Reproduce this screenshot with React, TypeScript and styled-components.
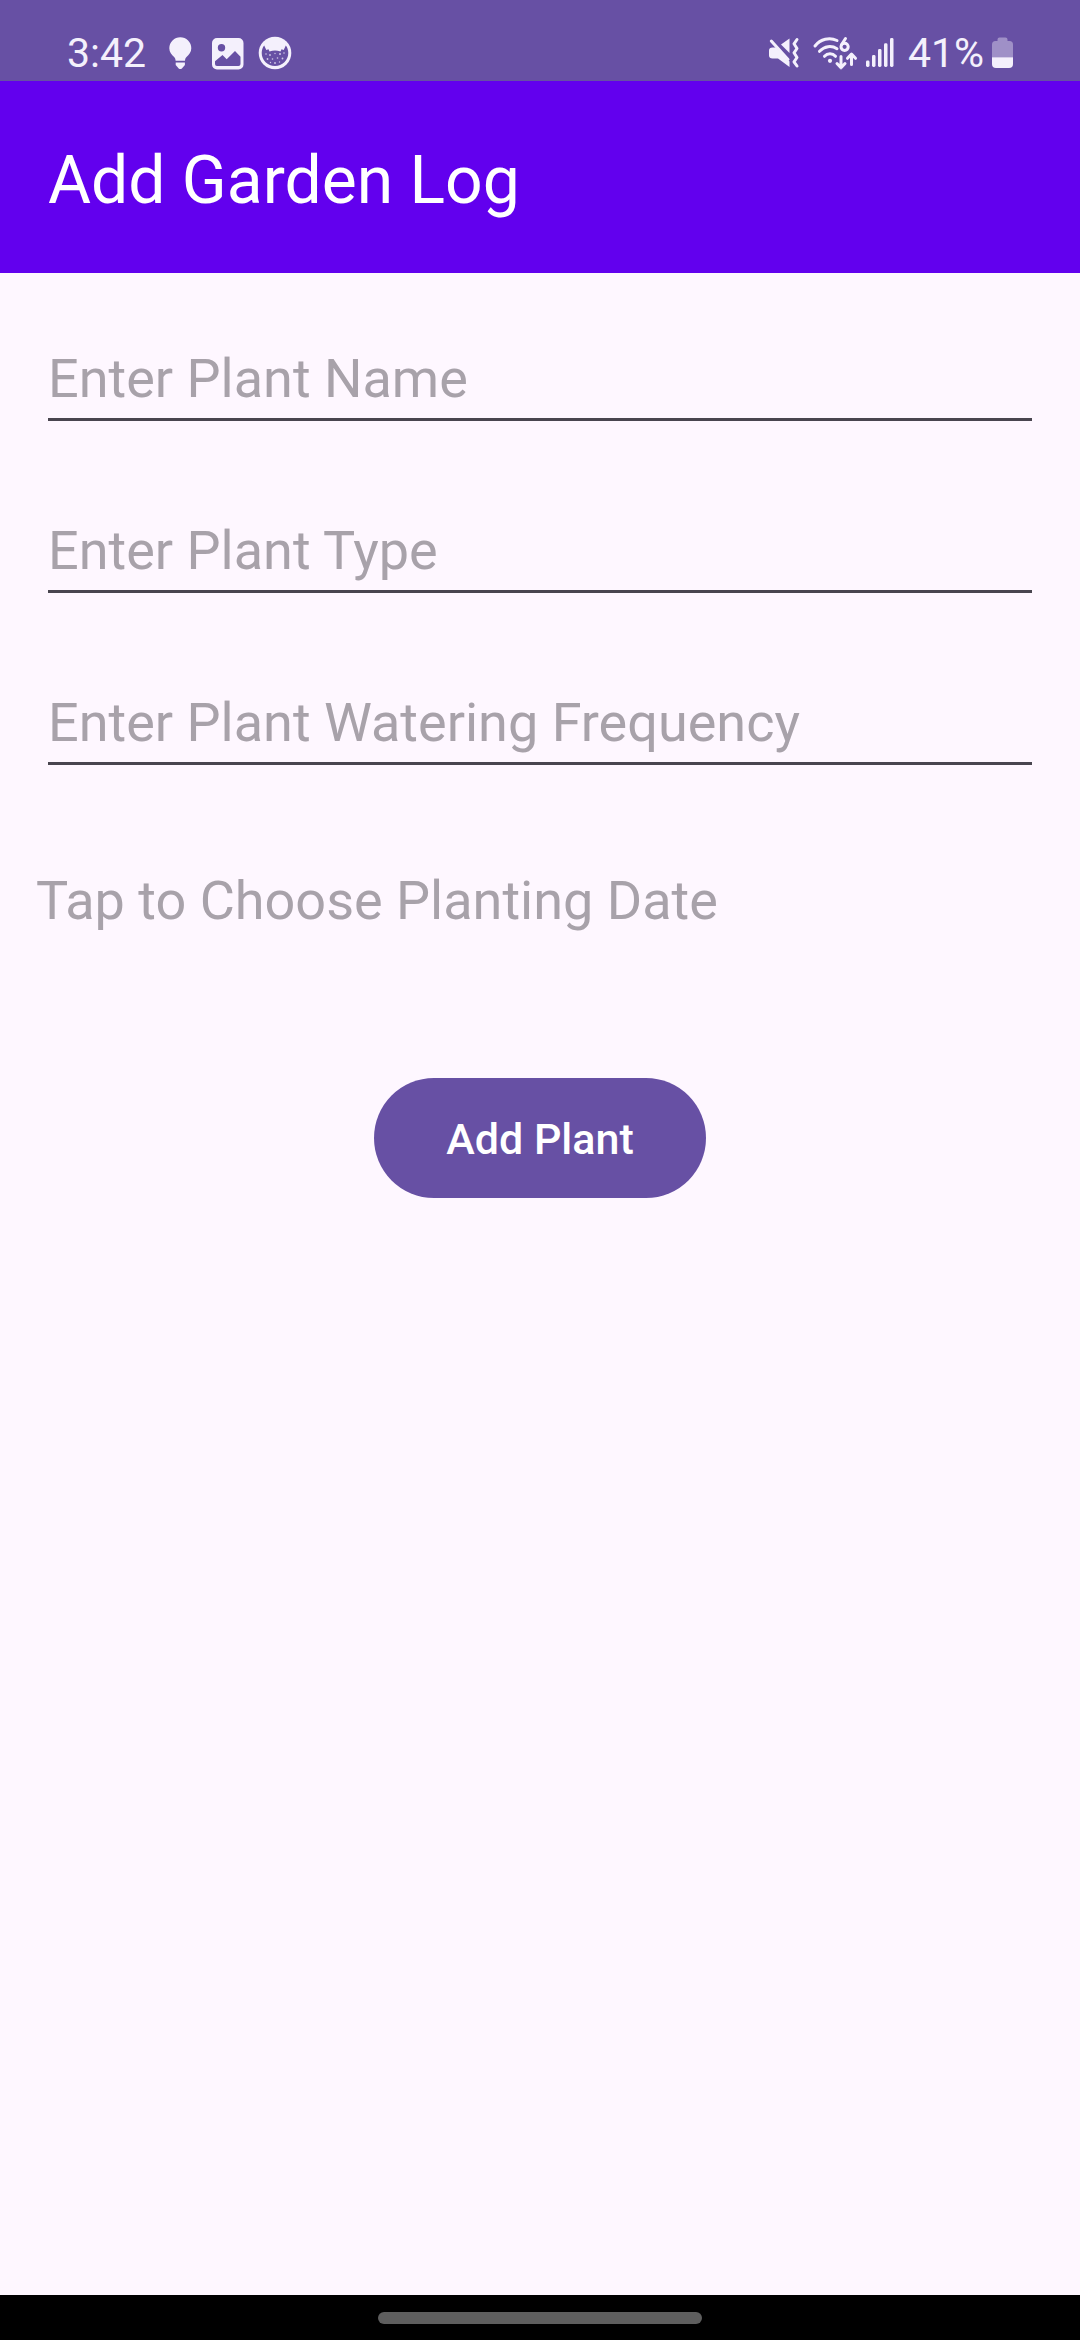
import React, { useState } from "react";
import styled, { createGlobalStyle } from "styled-components";

const ink = "#f4f0fc";

const GlobalStyle = createGlobalStyle`
  *, *::before, *::after { box-sizing: border-box; }
  body { margin: 0; background: #fef7ff; }
  body, input, button { font-family: Roboto, "Liberation Sans", sans-serif; }
`;

const Screen = styled.div`
  display: flex;
  flex-direction: column;
  min-height: 100vh;
  background: #fef7ff;
`;

const StatusBar = styled.div`
  display: flex;
  align-items: center;
  justify-content: space-between;
  height: 81px;
  padding: 25px 67px 0;
  background: #6750a4;
  color: ${ink};
`;

const StatusGroup = styled.div<{ $gap: number }>`
  display: flex;
  align-items: center;
  gap: ${(p) => p.$gap}px;
`;

const StatusText = styled.span<{ $before?: number; $after?: number }>`
  margin: 0 ${(p) => p.$after ?? 0}px 0 ${(p) => p.$before ?? 0}px;
  font-size: 41px;
  line-height: 48px;
`;

const Glyph = styled.svg`
  display: block;
  flex: none;
`;

const AppBar = styled.header`
  display: flex;
  align-items: center;
  height: 192px;
  padding: 8px 48px 0;
  background: #6200ee;
`;

const Title = styled.h1`
  margin: 0;
  color: #ffffff;
  font-size: 66px;
  font-weight: 400;
  line-height: 78px;
`;

const Form = styled.form`
  display: flex;
  flex: 1;
  flex-direction: column;
  padding: 60px 36px;
`;

const Fields = styled.div`
  display: flex;
  flex-direction: column;
  gap: 84px;
  padding: 0 12px;
`;

const TextField = styled.input`
  width: 100%;
  height: 88px;
  padding: 13px 0 8px;
  border: 0;
  border-bottom: 3px solid #49454f;
  border-radius: 0;
  outline: none;
  background: transparent;
  color: #1d1b20;
  font-size: 54px;
  line-height: 64px;
  &::placeholder { color: #a8a2aa; opacity: 1; }
`;

const DateButton = styled.button`
  margin-top: 104px;
  padding: 0;
  border: 0;
  background: transparent;
  color: #a8a2aa;
  font-size: 54px;
  line-height: 64px;
  text-align: left;
  cursor: pointer;
`;

const SubmitButton = styled.button`
  align-self: center;
  height: 120px;
  margin-top: 145px;
  padding: 2px 72px 0;
  border: 0;
  border-radius: 60px;
  background: #6750a4;
  color: #ffffff;
  font-size: 43px;
  font-weight: 500;
  line-height: 48px;
  cursor: pointer;
`;

const NavigationBar = styled.footer`
  display: flex;
  justify-content: center;
  height: 45px;
  padding-top: 17px;
  background: #000000;
`;

const Handle = styled.div`
  width: 30%;
  height: 12px;
  border-radius: 6px;
  background: #5e5e5e;
`;

const BulbIcon = () => (
  <Glyph width="36" height="34" viewBox="-6 0 36 34" fill={ink} aria-hidden="true">
    <path d="M12.3 1.3a11 11 0 0 1 11 11c0 4-2.4 6.6-4.8 8.6-1 .9-1.3 2-1.5 3.8H7.6c-.2-1.8-.5-2.9-1.5-3.8-2.4-2-4.8-4.6-4.8-8.6a11 11 0 0 1 11-11z" />
    <path d="M7.7 26.500h9.200v2.500l-3 3.500q-1.600 1-3.200 0l-3-3.500z" />
  </Glyph>
);

const PictureIcon = () => (
  <Glyph width="32" height="34" viewBox="0 0 32 34" fill={ink} aria-hidden="true">
    <path
      fillRule="evenodd"
      d="M5 2h21.500a5 5 0 0 1 5 5v21.500a5 5 0 0 1-5 5H5a5 5 0 0 1-5-5V7a5 5 0 0 1 5-5zM9.500 8a3.700 3.700 0 1 0 0 7.400 3.700 3.700 0 0 0 0-7.400zM3 25.200v2.800a2 2 0 0 0 2 2h21.500a2 2 0 0 0 2-2v-7.300l-5.500-5.700-8.300 8.300-4.200-4.300z"
    />
  </Glyph>
);

const FaceIcon = () => (
  <Glyph width="34" height="34" viewBox="0 0 34 34" aria-hidden="true">
    <circle cx="17" cy="17" r="16.300" fill={ink} />
    <path
      d="M6.200 9.500L8.300 14l2.200-.8 1 2.300c3.600-1.200 7.400-1.200 11 0l1-2.300 2.200.8 2.100-4.500c1.700 2 2.500 4.700 2.500 7.500 0 7.300-6 13-13.300 13S3.700 24.300 3.700 17c0-2.800.8-5.500 2.500-7.500z"
      fill="#6750a4"
    />
    <g fill={ink} opacity=".75">
      <circle cx="8" cy="18" r=".8" />
      <circle cx="12" cy="19" r=".9" />
      <circle cx="17" cy="17.500" r=".7" />
      <circle cx="22" cy="18" r="1" />
      <circle cx="26" cy="17" r=".8" />
      <circle cx="9.500" cy="23" r=".9" />
      <circle cx="14.500" cy="23" r=".8" />
      <circle cx="19.500" cy="22" r=".8" />
      <circle cx="24.500" cy="22.500" r=".9" />
      <circle cx="17" cy="27" r=".9" />
      <circle cx="21.500" cy="26" r=".7" />
      <circle cx="12.500" cy="26.500" r=".7" />
    </g>
  </Glyph>
);

const MuteIcon = () => (
  <Glyph width="36" height="34" viewBox="0 0 36 34" fill={ink} aria-hidden="true">
    <path d="M4.500 11.500H8L21.500 25.500V31L10 22.500H4.500C2.300 22.500 1 21.300 1 19.500v-5c0-1.800 1.300-3 3.500-3z" />
    <path d="M21.500 2.500V17L13 8.500z" />
    <g fill="none" stroke={ink} strokeWidth="3" strokeLinecap="round" strokeLinejoin="round">
      <path d="M3.300 5L20 23.500" />
      <path d="M29 3.500L26 7.800l3 4.700-3 4.300 3 4.700-3 4.300 3 4.200" />
    </g>
  </Glyph>
);

const WifiIcon = () => (
  <Glyph width="46" height="34" viewBox="0 0 46 34" fill="none" stroke={ink} strokeWidth="3" strokeLinecap="round" strokeLinejoin="round" aria-hidden="true">
    <path d="M3 10C8.500 3 17.500 1 25 4.500" />
    <path d="M7.500 15.300c5-5.300 12-6.100 17.500-2.600" />
    <path d="M12.500 20.300c3-3.400 8-3.400 11 0" />
    <circle cx="18" cy="24.800" r="2.100" fill={ink} stroke="none" />
    <circle cx="32.600" cy="10.800" r="3.600" />
    <path d="M29.500 8.800L33.500 2.500" />
    <path d="M29 20.500v11M25 27.500l4 4.300 4-4.300" />
    <path d="M39.500 28.500V18.500M35.500 22.300l4-4.300 4 4.300" />
  </Glyph>
);

const SignalIcon = () => (
  <Glyph width="28" height="34" viewBox="0 0 28 34" fill={ink} aria-hidden="true">
    <rect x="0" y="24.500" width="3.500" height="6.500" rx="1.400" />
    <rect x="6" y="19" width="3.500" height="12" rx="1.400" />
    <rect x="12" y="13" width="3.500" height="18" rx="1.400" />
    <rect x="18" y="7.300" width="3.500" height="23.700" rx="1.400" />
    <rect x="24" y="2" width="3.500" height="29" rx="1.400" />
  </Glyph>
);

const BatteryIcon = () => (
  <Glyph width="21" height="34" viewBox="0 0 21 34" fill={ink} aria-hidden="true">
    <path opacity=".4" d="M0 21.300V8.500a3.500 3.500 0 0 1 3.500-3.500H5.500V3.500A2 2 0 0 1 7.500 1.500h6a2 2 0 0 1 2 2V5h2A3.500 3.500 0 0 1 21 8.500v12.800z" />
    <path d="M0 21.300h21V28a4 4 0 0 1-4 4H4a4 4 0 0 1-4-4z" />
  </Glyph>
);

const hints = [
  { name: "plantName", hint: "Enter Plant Name" },
  { name: "plantType", hint: "Enter Plant Type" },
  { name: "wateringFrequency", hint: "Enter Plant Watering Frequency" },
];

export default function App() {
  const [values, setValues] = useState<Record<string, string>>({});

  return (
    <>
      <GlobalStyle />
      <Screen>
        <StatusBar>
          <StatusGroup $gap={14}>
            <StatusText $after={2}>3:42</StatusText>
            <BulbIcon />
            <PictureIcon />
            <FaceIcon />
          </StatusGroup>
          <StatusGroup $gap={8}>
            <MuteIcon />
            <WifiIcon />
            <SignalIcon />
            <StatusText $before={6}>41%</StatusText>
            <BatteryIcon />
          </StatusGroup>
        </StatusBar>
        <AppBar>
          <Title>Add Garden Log</Title>
        </AppBar>
        <Form onSubmit={(e: React.FormEvent) => e.preventDefault()}>
          <Fields>
            {hints.map(({ name, hint }) => (
              <TextField
                key={name}
                type="text"
                name={name}
                aria-label={hint}
                placeholder={hint}
                value={values[name] ?? ""}
                onChange={(e: React.ChangeEvent<HTMLInputElement>) =>
                  setValues({ ...values, [name]: e.target.value })
                }
              />
            ))}
          </Fields>
          <DateButton type="button">Tap to Choose Planting Date</DateButton>
          <SubmitButton type="submit">Add Plant</SubmitButton>
        </Form>
        <NavigationBar>
          <Handle />
        </NavigationBar>
      </Screen>
    </>
  );
}
